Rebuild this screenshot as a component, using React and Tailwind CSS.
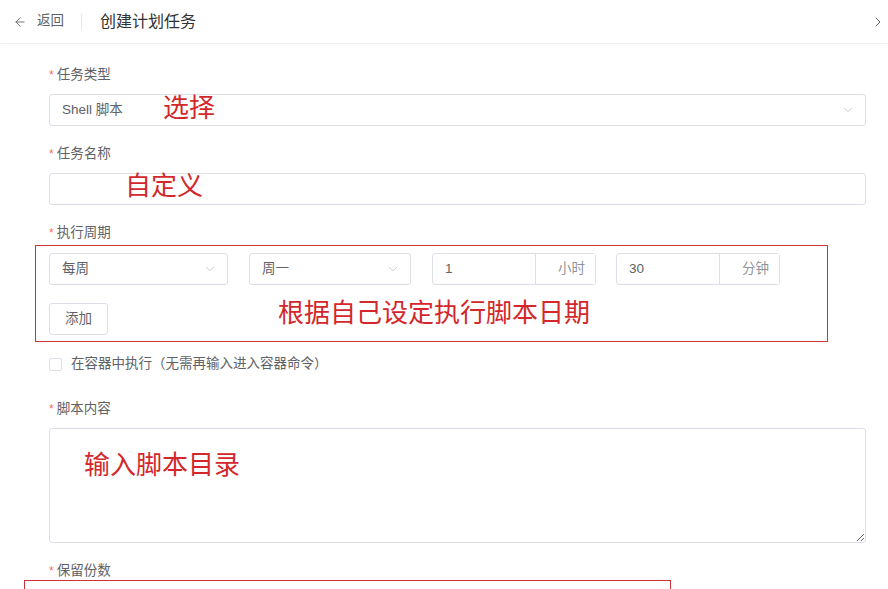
import { ArrowLeft, ChevronDown, ChevronRight } from "lucide-react"

function Label({ children }) {
  return (
    <div className="h-5 leading-5 text-[13.5px] text-[#606266]">
      <span className="text-[#f56c6c] text-[12px] mr-[3px]">*</span>
      {children}
    </div>
  )
}

function Select({ value, className = "" }) {
  return (
    <div className={`h-8 flex items-center justify-between border border-[#dcdfe6] rounded-[3px] pl-3 pr-[10px] bg-white ${className}`}>
      <span className="text-[13.5px] text-[#606266]">{value}</span>
      <ChevronDown className="h-[14px] w-[14px] text-[#c0c4cc]" strokeWidth={1.5} />
    </div>
  )
}

function AddonInput({ value, unit }) {
  return (
    <div className="h-8 w-[164px] flex border border-[#dcdfe6] rounded-[3px] bg-white">
      <div className="flex-1 flex items-center pl-3 text-[13.5px] text-[#606266]">{value}</div>
      <div className="w-[60px] flex items-center justify-center border-l border-[#dcdfe6] bg-white text-[13.5px] text-[#909399] pl-3">
        {unit}
      </div>
    </div>
  )
}

function Note({ children, className = "" }) {
  return (
    <span className={`absolute whitespace-nowrap text-[26px] leading-[28px] text-[#d3272c] ${className}`}>
      {children}
    </span>
  )
}

export default function App() {
  return (
    <div className="h-[589px] bg-white font-['Liberation_Sans','Noto_Sans_CJK_SC',sans-serif] overflow-hidden">
      {/* header */}
      <div className="h-[44px] flex items-center pl-[13px] pr-[2px] border-b border-[#f0f0f0] shadow-[0_1px_2px_rgba(0,0,0,0.03)]">
        <ArrowLeft className="h-[14px] w-[14px] text-[#606266]" strokeWidth={1.5} />
        <span className="ml-[10px] text-[13.5px] text-[#606266]">返回</span>
        <div className="ml-[17px] mr-[18px] h-4 w-px bg-[#e4e7ed]" />
        <span className="text-[16px] text-[#303133]">创建计划任务</span>
        <div className="flex-1" />
        <ChevronRight className="h-4 w-4 text-[#606266]" strokeWidth={1.5} />
      </div>

      <div className="pl-[49px] pr-[22px] pt-[21px]">
        {/* 任务类型 */}
        <Label>任务类型</Label>
        <div className="relative mt-[9px]">
          <Select value="Shell 脚本" />
          <Note className="left-[114px] top-0">选择</Note>
        </div>

        {/* 任务名称 */}
        <div className="mt-[18px]">
          <Label>任务名称</Label>
        </div>
        <div className="relative mt-[9px] h-8 border border-[#dcdfe6] rounded-[3px]">
          <Note className="left-[75px] -top-[2px]">自定义</Note>
        </div>

        {/* 执行周期 */}
        <div className="mt-[18px]">
          <Label>执行周期</Label>
        </div>
        <div className="relative mt-[10px]">
          <div className="flex items-center">
            <Select value="每周" className="w-[179px]" />
            <Select value="周一" className="w-[162px] ml-[21px]" />
            <div className="ml-[21px]">
              <AddonInput value="1" unit="小时" />
            </div>
            <div className="ml-[20px]">
              <AddonInput value="30" unit="分钟" />
            </div>
          </div>
          <button className="mt-[18px] h-8 w-[59px] border border-[#dcdfe6] rounded-[3px] bg-white text-[13.5px] text-[#606266]">
            添加
          </button>
          <Note className="left-[229px] top-[46px]">根据自己设定执行脚本日期</Note>
          <div className="absolute z-10 -left-[14px] -top-[8px] w-[793px] h-[97px] border border-[#cc3338]" />
        </div>

        {/* checkbox */}
        <div className="mt-[19px] h-5 flex items-center">
          <span className="w-[13px] h-[13px] border border-[#dcdfe6] rounded-[2px] bg-white" />
          <span className="ml-[9px] text-[13.5px] text-[#606266]">在容器中执行（无需再输入进入容器命令）</span>
        </div>

        {/* 脚本内容 */}
        <div className="mt-[25px]">
          <Label>脚本内容</Label>
        </div>
        <div className="relative mt-[9px]">
          <textarea className="block w-full h-[115px] border border-[#dcdfe6] rounded-[3px] resize-y outline-none" />
          <Note className="left-[35px] top-[23px]">输入脚本目录</Note>
        </div>

        {/* 保留份数 */}
        <div className="mt-[18px]">
          <Label>保留份数</Label>
        </div>
        <div className="relative h-5">
          <div className="absolute -left-[25px] -top-px w-[647px] h-[40px] border border-[#cc3338]" />
        </div>
      </div>
    </div>
  )
}
